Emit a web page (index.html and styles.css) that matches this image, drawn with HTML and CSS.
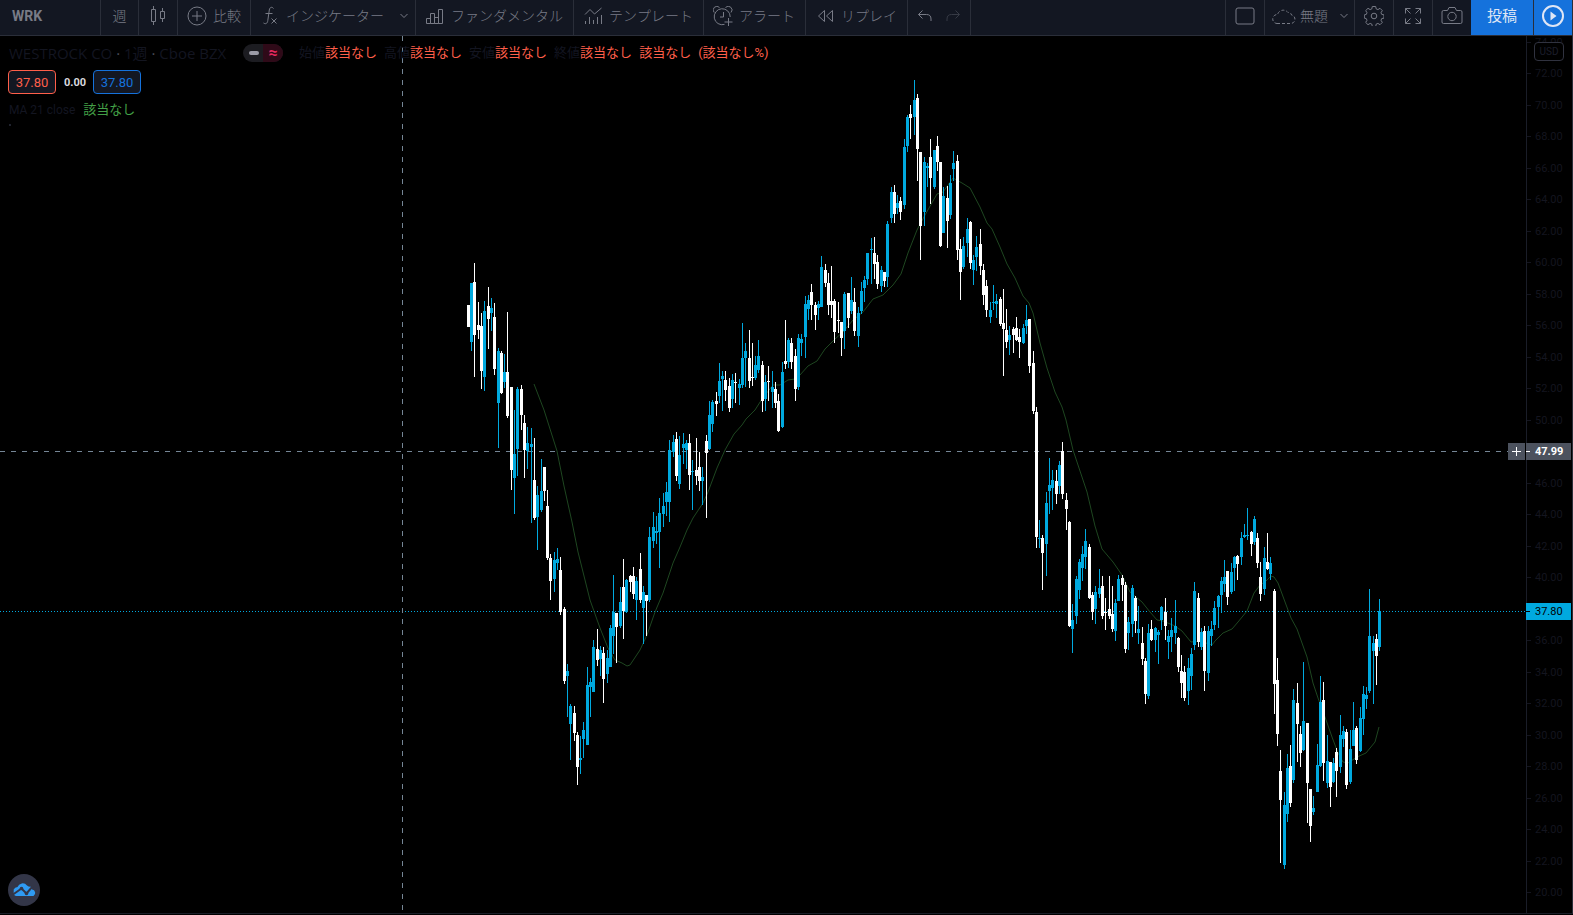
FILE: index.html
```html
<!DOCTYPE html>
<html lang="ja">
<head>
    <meta charset="UTF-8">
    <meta name="viewport" content="width=device-width, initial-scale=1.0">
    <title>WRK 37.80</title>
    <link rel="stylesheet" href="styles.css">
</head>
<body>
    <header class="toolbar">
        <button class="tool symbol">WRK</button>
        <button class="tool square">週</button>
        <button class="tool square" aria-label="ローソク足">
            <svg class="icon" viewBox="0 0 20 20"><path d="M5.500 0v3M5.500 16v3M3.500 3.500h4v12h-4zM14.500 2v3M14.500 13v3M12.500 5.500h4v7h-4z"/></svg>
        </button>
        <button class="tool">
            <svg class="icon" viewBox="0 0 20 20"><circle cx="10" cy="10" r="9"/><path d="M5 10h10M10 5v10"/></svg>
            比較
        </button>
        <button class="tool open">
            <svg class="icon" viewBox="0 0 20 20"><path d="M13.500 2.500C12 .5 9.800 1 9.300 4L7.800 14.500C7.500 17.500 5.500 18.500 3.500 17M5.500 7.500h7M11.500 12.500l5 5M16.500 12.500l-5 5"/></svg>
            インジケーター
        </button>
        <button class="tool more" aria-label="お気に入り">
            <svg class="chevron" viewBox="0 0 8 6"><path d="M.5 1l3.500 3.500L7.500 1"/></svg>
        </button>
        <button class="tool feature">
            <svg class="icon" viewBox="0 0 20 20"><path d="M1.500 12.500h4v5h-4zM5.500 17.500v-10h4v10M9.500 17.500v-6h4v6M13.500 17.500v-14h4v14zM9.500 17.500h4M5.500 17.500h4"/></svg>
            ファンダメンタル
        </button>
        <button class="tool feature">
            <svg class="icon" viewBox="0 0 20 20"><path d="M2 8.500l5-5 4.500 4.500 7-6M2.500 18v-3M6.500 18v-7M10.500 18v-4M14.500 18v-7M18.500 18v-9"/></svg>
            テンプレート
        </button>
        <button class="tool feature">
            <svg class="icon" viewBox="0 0 20 20"><path d="M11.500 18.400A8 8 0 1 1 17.200 11M10.500 6v5H7M15.500 12v8M11.500 16h8M1.200 6.500A3.500 3.500 0 0 1 6.500 1.500M12.500 1.500A3.500 3.500 0 0 1 18 6.500"/></svg>
            アラート
        </button>
        <button class="tool feature">
            <svg class="icon" viewBox="0 0 20 20"><path d="M9.500 4.500v11l-6-5.500zM17.500 4.500v11l-6-5.500z"/></svg>
            リプレイ
        </button>
        <div class="history">
            <button class="step" aria-label="元に戻す">
                <svg class="icon" viewBox="0 0 20 20"><path d="M7.500 4.500l-4 4 4 4M3.500 8.500h8q4.500 0 4.500 4.500v2"/></svg>
            </button>
            <button class="step" aria-label="やり直す" disabled>
                <svg class="icon" viewBox="0 0 20 20"><path d="M12.500 4.500l4 4-4 4M16.500 8.500h-8q-4.500 0-4.500 4.500v2"/></svg>
            </button>
        </div>
        <div class="spacer"></div>
        <button class="tool square" aria-label="レイアウト">
            <svg class="icon" viewBox="0 0 20 20"><rect x="1" y="2" width="18" height="16" rx="2"/></svg>
        </button>
        <button class="tool layout-name">
            <svg class="cloud" viewBox="0 0 24 20"><path d="M5 17.500h14a4.300 4.300 0 0 0 .5-8.500A3 3 0 0 0 16 6.500 6 6 0 0 0 5.500 8.500 4.500 4.500 0 0 0 5 17.500z"/></svg>
            無題
            <svg class="chevron" viewBox="0 0 8 6"><path d="M.5 1l3.500 3.500L7.500 1"/></svg>
        </button>
        <button class="tool square" aria-label="設定">
            <svg class="icon" viewBox="0 0 20 20"><circle cx="10" cy="10" r="2.800"/><path d="M8.300.5h3.400l.5 2.400 1.700.7 2.100-1.300 2.300 2.300-1.300 2.100.7 1.700 2.300.5v3.200l-2.300.5-.7 1.700 1.300 2.100-2.300 2.300-2.100-1.300-1.700.7-.5 2.400H8.300l-.5-2.400-1.700-.7L4 18.700l-2.300-2.300L3 14.300l-.7-1.700-2-.5V8.900l2-.5L3 6.700 1.700 4.600 4 2.300l2.100 1.300 1.700-.7z"/></svg>
        </button>
        <button class="tool square" aria-label="全画面">
            <svg class="icon" viewBox="0 0 20 20"><path d="M2.500 7.500v-5h5M2.500 2.500l5 5M12.500 2.500h5v5M17.500 2.500l-5 5M2.500 12.500v5h5M2.500 17.500l5-5M12.500 17.500h5v-5M17.500 17.500l-5-5"/></svg>
        </button>
        <button class="tool square camera" aria-label="スナップショット">
            <svg class="icon wide" viewBox="0 0 22 20"><path d="M2.500 4.500h4l1.500-3h6l1.500 3h4q1.500 0 1.500 1.500v10q0 1.500-1.500 1.500h-17Q1 17.500 1 16V6q0-1.500 1.500-1.500z"/><circle cx="11" cy="10.500" r="4.200"/></svg>
        </button>
        <button class="tool publish">投稿</button>
        <button class="tool square play" aria-label="ライブ配信">
            <svg class="icon wide" viewBox="0 0 22 22"><circle cx="11" cy="11" r="10"/><path class="solid" d="M8.500 6.500v9l6-4.500z"/></svg>
        </button>
    </header>

    <main class="chart">
        <div class="pane">
            <svg class="plot" id="plot">
                <line class="last-line" x1="0" y1="575.5" x2="100%" y2="575.5"/>
                <line class="cross" x1="0" y1="415.5" x2="100%" y2="415.5"/>
                <line class="cross" x1="402.5" y1="0" x2="402.5" y2="874"/>
                <g id="series" transform="translate(0 -36)"></g>
            </svg>

            <section class="legend">
                <div class="row">
                    <div class="title">WESTROCK CO <i>·</i> 1週 <i>·</i> Cboe BZX</div>
                    <div class="pill"><span class="dash"></span><span class="wave">≈</span></div>
                    <div class="ohlc">
                        <span>始値<b>該当なし</b></span>
                        <span>高値<b>該当なし</b></span>
                        <span>安値<b>該当なし</b></span>
                        <span>終値<b>該当なし</b></span>
                        <b>該当なし</b>
                        <b>(該当なし%)</b>
                    </div>
                </div>
                <div class="row quotes">
                    <button class="quote sell">37.80</button>
                    <span class="spread">0.00</span>
                    <button class="quote buy">37.80</button>
                </div>
                <div class="row study">MA 21 close <b>該当なし</b></div>
                <div class="tail"></div>
            </section>

            <button class="logo" aria-label="チャートについて">
                <svg viewBox="0 0 32 32"><path class="cloud-shape" d="M8 22a2.700 2.700 0 0 1-2.300-3.500v-3A4.500 4.500 0 0 1 9.500 13 5.500 5.500 0 0 1 19 11.500q1.500 1.500 3 1Q24.500 13 24 15.500a3.500 3.500 0 0 1 1.500 6.500z"/><path class="cloud-cut" d="M5 20.500l8.500-6 5 5L25 12"/><circle cx="13.500" cy="14.500" r="1.800"/><circle cx="18.500" cy="19.500" r="1.800"/></svg>
            </button>
            <button class="add" aria-label="追加">
                <svg viewBox="0 0 17 17"><path d="M4 8.500h9M8.500 4v9"/></svg>
            </button>
        </div>

        <aside class="axis">
            <svg class="scale" id="scale"></svg>
            <button class="currency">USD</button>
            <div class="tag cross-tag">47.99</div>
            <div class="tag last-tag">37.80</div>
        </aside>
    </main>

    <script src="chart.js"></script>
</body>
</html>
```
FILE: styles.css
```css
* {
    box-sizing: border-box;
}
body {
    margin: 0;
    height: 100vh;
    display: flex;
    flex-direction: column;
    overflow: hidden;
    background: #000;
    color: #787b86;
    font-family: Roboto, "Noto Sans CJK JP", sans-serif;
    font-size: 14px;
    line-height: 20px;
    font-kerning: none;
}
button {
    margin: 0;
    padding: 0;
    border: 0;
    background: none;
    color: inherit;
    font: inherit;
    cursor: pointer;
}
svg {
    display: block;
    flex: none;
    fill: none;
    stroke: currentColor;
}

/* toolbar */
.toolbar {
    display: flex;
    flex: none;
    height: 36px;
    background: #131722;
    border-bottom: 1px solid #2a2e39;
    border-right: 1px solid #2a2e39;
}
.tool {
    display: flex;
    align-items: center;
    gap: 6px;
    padding: 0 9px 3px;
    border-right: 1px solid #2a2e39;
    font-weight: 300;
    white-space: nowrap;
}
.icon {
    width: 20px;
    height: 20px;
}
.wide {
    width: 22px;
}
.symbol {
    width: 101px;
    padding-left: 12px;
    font-weight: bold;
}
.square {
    width: 39px;
    padding-left: 0;
    padding-right: 0;
    justify-content: center;
}
.symbol + .square {
    width: 38px;
}
.open {
    padding-right: 0;
    border-right: 0;
}
.more {
    width: 32px;
    padding-left: 16px;
}
.feature {
    padding-right: 10px;
}
.chevron {
    width: 8px;
    height: 6px;
}
.history {
    display: flex;
    padding: 0 3px 3px;
    border-right: 1px solid #2a2e39;
}
.step {
    width: 28px;
    display: flex;
    align-items: center;
    justify-content: center;
}
.step:disabled {
    color: #363a45;
}
.spacer {
    flex: 1;
    border-right: 1px solid #2a2e39;
}
.layout-name {
    gap: 4px;
    padding: 0 6px 3px 7px;
}
.layout-name .chevron {
    margin-left: 8px;
}
.cloud {
    width: 24px;
    height: 20px;
    stroke-dasharray: 3 2;
}
.camera {
    width: 38px;
    border-right: 0;
}
.publish,
.play {
    background: #1572dc;
    color: #dfe6f5;
}
.publish {
    width: 63px;
    justify-content: center;
    font-size: 15px;
    font-weight: normal;
}
.play {
    width: 38px;
    border-right: 0;
}
.play .icon {
    height: 22px;
    stroke-width: 2;
}
.solid {
    fill: currentColor;
    stroke: none;
}

/* chart */
.chart {
    display: flex;
    flex: 1;
    min-height: 0;
    margin-bottom: 1px;
    border-bottom: 1px solid #1a1d28;
    border-right: 1px solid #2a2e39;
}
.pane {
    position: relative;
    flex: 1;
    min-width: 0;
}
.plot,
.scale {
    width: 100%;
    height: 100%;
    stroke: none;
}
.cross {
    stroke: #758696;
    stroke-dasharray: 5 6;
}
.last-line {
    stroke: #00a9df;
    stroke-dasharray: 1 2;
}
.up {
    fill: #00a9df;
}
.down {
    fill: #fff;
}
.average {
    stroke: #1e4620;
}

/* legend */
.legend {
    position: absolute;
    top: 8px;
    left: 8px;
    color: #131520;
}
.row {
    display: flex;
    align-items: center;
    height: 18px;
    white-space: nowrap;
}
.legend b {
    font-weight: normal;
}
.title {
    width: 235px;
    padding-left: 1px;
    font-family: "Open Sans", "Noto Sans CJK JP", sans-serif;
    font-size: 15px;
}
.title i {
    color: #4a4d58;
    font-style: normal;
}
.pill {
    display: flex;
    width: 40px;
    height: 18px;
    margin-right: 16px;
    border-radius: 9px;
    overflow: hidden;
    background: #1c1c21;
}
.dash {
    width: 10px;
    height: 4px;
    margin: 7px 4px 7px 6px;
    border-radius: 2px;
    background: #9b9ba6;
}
.wave {
    flex: 1;
    background: #2f0a18;
    color: #e8295f;
    font-size: 16px;
    font-weight: bold;
    line-height: 18px;
    text-align: center;
}
.ohlc {
    display: flex;
    gap: 7px;
    font-size: 13px;
}
.ohlc b {
    color: #ff5f4a;
}
.quotes {
    height: 24px;
    margin-top: 8px;
    gap: 8px;
}
.quote {
    width: 48px;
    height: 24px;
    padding-top: 2px;
    border: 1px solid;
    border-radius: 4px;
    background: #131722;
    font-size: 13px;
}
.sell {
    color: #ff5f4a;
}
.buy {
    color: #1572dc;
}
.spread {
    width: 21px;
    padding-top: 2px;
    color: #d8d9de;
    font-size: 11px;
    font-weight: bold;
}
.study {
    margin-top: 7px;
    padding-left: 1px;
    gap: 8px;
    font-size: 12px;
}
.study b {
    color: #43a047;
    font-size: 13px;
}
.tail {
    width: 2px;
    height: 2px;
    margin: 5px 0 0 1px;
    background: #20232e;
}
.logo {
    position: absolute;
    left: 8px;
    bottom: 7px;
    width: 32px;
    height: 32px;
    border-radius: 50%;
    background: #333648;
    color: #333648;
}
.cloud-shape {
    fill: #2f9bf3;
    stroke: none;
}
.cloud-cut {
    stroke-width: 2;
}
.logo circle {
    fill: currentColor;
    stroke: none;
}
.add {
    position: absolute;
    top: 407px;
    right: 1px;
    width: 17px;
    height: 17px;
    background: #4c525e;
    color: #fff;
}

/* price axis */
.axis {
    position: relative;
    flex: none;
    width: 46px;
    border-left: 1px solid #1a1d28;
}
.scale {
    fill: #14151f;
    font-size: 11px;
}
.currency {
    position: absolute;
    top: 6px;
    right: 8px;
    width: 30px;
    height: 19px;
    border: 1px solid #30323f;
    border-radius: 4px;
    background: #000;
    color: #1c1e2b;
    font-size: 10px;
    line-height: 17px;
}
.tag {
    position: absolute;
    left: -1px;
    width: 45px;
    height: 17px;
    padding-left: 9px;
    font-size: 11px;
    line-height: 17px;
}
.tag::before {
    content: "";
    position: absolute;
    top: 8px;
    left: 0;
    width: 4px;
    height: 1px;
    background: currentColor;
}
.cross-tag {
    top: 407px;
    background: #4c525e;
    color: #fff;
    font-weight: bold;
}
.last-tag {
    top: 567px;
    background: #00a9df;
    color: #000;
}
```
FILE: chart.js
```javascript
const SVG = 'http://www.w3.org/2000/svg';
const series = document.getElementById('series');
const scale = document.getElementById('scale');

// weekly bars: direction, high, body top, body bottom, low
const bars = `
d 305 305 327 327|u 283 283 342 351|d 263 282 335 377|d 302 325 330 339|d 313 326 371 389|u 301 311 377 391
d 287 306 319 349|u 298 308 313 331|d 303 317 369 375|u 348 351 403 448|d 351 353 393 394|u 354 372 382 388
d 312 372 416 418|d 387 387 470 490|u 410 454 478 514|u 387 389 449 476|d 385 389 415 430|d 415 423 450 478
u 427 443 451 469|u 428 444 447 523|d 438 480 518 520|u 486 495 517 550|u 459 491 510 512|d 467 467 491 501
d 490 506 558 560|d 554 558 581 600|u 552 560 579 592|u 548 559 563 570|d 557 570 612 615|d 607 609 681 684
u 664 671 676 717|u 704 706 724 760|d 706 713 733 741|d 732 735 767 785|u 736 758 760 774|u 722 730 739 758
u 667 685 745 745|u 678 682 687 717|u 640 647 692 692|d 629 649 660 666|u 646 650 659 676|d 647 653 679 703
u 650 658 674 683|u 625 628 667 667|u 575 612 636 654|d 613 613 627 663|u 587 602 626 628|d 559 587 611 639
u 579 580 612 613|d 575 576 582 592|d 567 576 594 599|u 577 581 600 620|d 553 569 600 603|u 586 592 608 644
d 595 595 601 636|u 527 537 600 602|u 512 527 541 548|u 516 531 533 544|u 498 513 532 568|u 493 506 514 527
u 482 492 502 516|u 440 450 502 522|u 435 442 452 457|d 432 439 476 481|u 436 455 484 489|u 433 444 448 464
u 440 443 450 469|d 434 443 475 490|u 460 471 472 510|d 438 470 476 485|d 452 467 481 491|u 467 477 481 505
d 435 441 453 518|u 401 415 449 450|u 400 402 424 432|d 392 401 404 416|u 363 381 396 403|u 371 376 379 411
d 371 380 390 401|d 378 386 408 412|u 374 380 399 408|d 373 382 383 403|u 379 384 388 405|u 323 358 385 388
u 343 351 358 387|d 330 358 381 388|d 343 377 378 386|u 356 365 378 380|u 340 356 370 373|d 361 365 401 412
u 375 382 399 411|d 366 381 382 401|u 371 387 392 408|d 382 389 403 408|d 394 401 431 432|u 362 372 427 428
d 320 361 364 369|u 338 340 362 368|d 338 343 362 369|d 349 356 389 401|u 334 338 387 390|u 334 339 343 356
u 296 304 337 358|u 295 300 309 320|d 284 292 305 320|d 302 305 315 330|u 301 304 308 320|u 256 267 307 307
d 264 270 283 287|d 273 283 305 315|d 266 301 305 318|d 299 301 332 343|d 302 320 321 333|d 322 322 338 356
u 292 294 331 349|d 293 293 318 328|u 277 300 311 314|d 288 302 331 336|u 307 313 336 347|u 282 291 311 314
u 276 280 288 302|u 253 253 279 285|u 238 249 250 284|d 237 253 264 279|d 255 262 284 289|u 266 270 286 292
d 272 272 281 287|u 221 224 277 287|u 187 192 218 223|d 185 192 214 223|u 195 203 208 214|d 197 201 212 220
u 139 147 205 209|u 115 117 146 152|d 105 114 118 139|u 80 100 117 135|d 94 98 149 181|d 152 152 226 260
u 157 162 212 226|u 163 166 168 187|d 139 157 178 204|u 150 150 187 189|d 136 146 162 171|d 162 162 246 247
u 187 196 233 233|d 186 198 221 248|u 175 183 215 219|u 151 163 169 181|d 155 161 250 260|d 239 249 272 300
u 237 246 267 269|u 218 229 243 257|d 221 222 263 269|u 255 260 270 285|u 236 247 257 271|d 229 244 266 275
d 264 270 295 305|d 280 286 310 317|u 302 310 317 323|u 285 302 303 310|u 294 301 304 318|d 297 299 324 326
d 289 323 329 376|d 309 330 342 348|u 326 335 340 355|d 327 329 335 353|d 317 328 340 341|d 329 337 342 358
u 324 328 343 344|u 305 320 326 334|d 319 319 366 373|d 351 363 411 414|d 407 412 537 548|u 520 538 539 548
d 535 538 553 590|u 492 503 544 576|u 458 485 491 514|u 470 480 488 510|d 470 481 494 504|u 461 465 486 494
d 442 451 494 499|d 493 500 509 530|d 521 522 626 627|u 604 620 629 653|u 576 579 616 624|u 559 562 590 599
u 546 554 568 581|u 529 541 557 569|d 544 547 598 599|d 592 595 612 620|u 586 592 609 624|u 569 588 594 598
d 576 586 616 619|d 598 612 613 630|d 576 609 616 619|d 586 614 629 632|u 599 603 631 641|u 575 579 601 601
d 575 578 585 601|d 582 585 649 653|u 617 622 633 650|u 585 588 624 637|d 596 598 621 633|u 606 629 633 644
d 627 643 659 665|d 658 661 694 704|u 624 633 696 699|d 620 629 640 641|u 627 628 640 652|u 630 632 635 664
u 606 607 620 630|d 598 612 626 640|u 630 636 642 659|u 618 630 637 652|u 600 626 633 644|d 637 638 667 672
d 655 671 683 698|d 666 672 698 701|u 658 668 691 705|u 648 654 676 690|u 582 591 645 650|d 593 598 642 647
u 628 632 647 650|d 626 631 671 691|u 626 631 673 681|u 621 629 636 646|u 601 608 625 630|u 595 596 607 628
u 577 581 595 613|u 560 577 584 592|d 571 571 597 605|u 563 572 592 594|u 556 557 568 591|d 555 556 564 580
u 532 538 557 565|u 524 535 537 538|u 508 535 536 540|d 531 532 544 556|u 516 519 542 545|d 533 538 563 568
d 562 577 594 601|u 547 558 589 595|d 533 562 569 570|u 557 563 574 580|d 589 591 684 714|d 658 680 734 746
d 750 771 800 863|u 792 805 865 869|u 754 768 814 822|d 745 766 803 807|u 689 700 780 783|d 683 703 724 762
d 726 734 753 767|u 662 721 750 751|d 723 723 783 823|d 789 789 826 842|u 796 808 812 815|u 744 765 792 792
u 676 702 766 767|d 682 700 763 781|u 735 761 783 788|d 762 762 787 807|u 758 763 782 783|d 748 752 771 797
u 715 735 767 773|u 726 731 739 747|d 729 732 785 789|u 730 749 782 784|u 702 730 746 746|d 726 728 760 764
u 707 718 751 752|u 686 694 719 735|u 687 695 699 709|u 589 636 691 693|u 636 643 651 704|d 634 639 656 685
u 599 611 647 651`;

// MA 21
const average = `534,384 544,410 557,451 564,486 572,522 578,552 590,600 600,628 608,648 615,660 622,663 627,666 630,665
640,650 647,635 655,612 663,593 668,578 673,563 680,547 687,530 693,518 703,503 708,492 717,468 725,450 734,434 742,425
746,419 755,410 762,399 773,385 780,385 788,380 795,379 800,375 808,366 817,361 825,349 835,339 843,332 853,320 863,312
873,299 883,295 893,285 901,274 908,253 917,230 925,215 937,194 943,192 953,178 962,183 970,188 980,207 987,223 992,229
1000,247 1007,264 1015,278 1023,296 1029,303 1033,313 1040,343 1047,368 1055,392 1062,407 1066,420 1073,450 1087,492
1095,526 1102,549 1113,562 1122,575 1130,592 1142,602 1150,612 1157,620 1163,621 1175,626 1182,631 1191,642 1200,641
1212,645 1215,641 1223,633 1232,629 1238,622 1247,611 1254,593 1260,585 1266,581 1271,576 1274,577 1278,583 1288,610
1291,618 1297,629 1307,657 1313,683 1318,698 1325,717 1332,737 1338,753 1343,762 1348,763 1357,757 1366,753 1375,742 1379,727`;

function add(parent, tag, attrs, text) {
    const el = document.createElementNS(SVG, tag);
    for (const name in attrs) {
        el.setAttribute(name, attrs[name]);
    }
    if (text) {
        el.textContent = text;
    }
    parent.appendChild(el);
}

function drawBars() {
    bars.trim().split(/[|\n]/).forEach((bar, i) => {
        const [dir, high, top, bottom, low] = bar.split(' ');
        const x = Math.floor(468.35 + i * 3.3025);
        const cls = dir === 'u' ? 'up' : 'down';
        add(series, 'rect', { class: cls, x: x, y: high, width: 1, height: low - high });
        add(series, 'rect', { class: cls, x: x - 1, y: top, width: 3, height: bottom - top });
    });
}

function drawScale() {
    for (let price = 74; price >= 20; price -= 2) {
        const y = Math.round(37 + (72 - price) * 15.75);
        add(scale, 'rect', { x: 0, y: y, width: 4, height: 1 });
        if (price !== 48 && price !== 38) {
            add(scale, 'text', { x: 8, y: y + 4 }, price.toFixed(2));
        }
    }
}

add(series, 'polyline', { class: 'average', points: average });
drawBars();
drawScale();
```
